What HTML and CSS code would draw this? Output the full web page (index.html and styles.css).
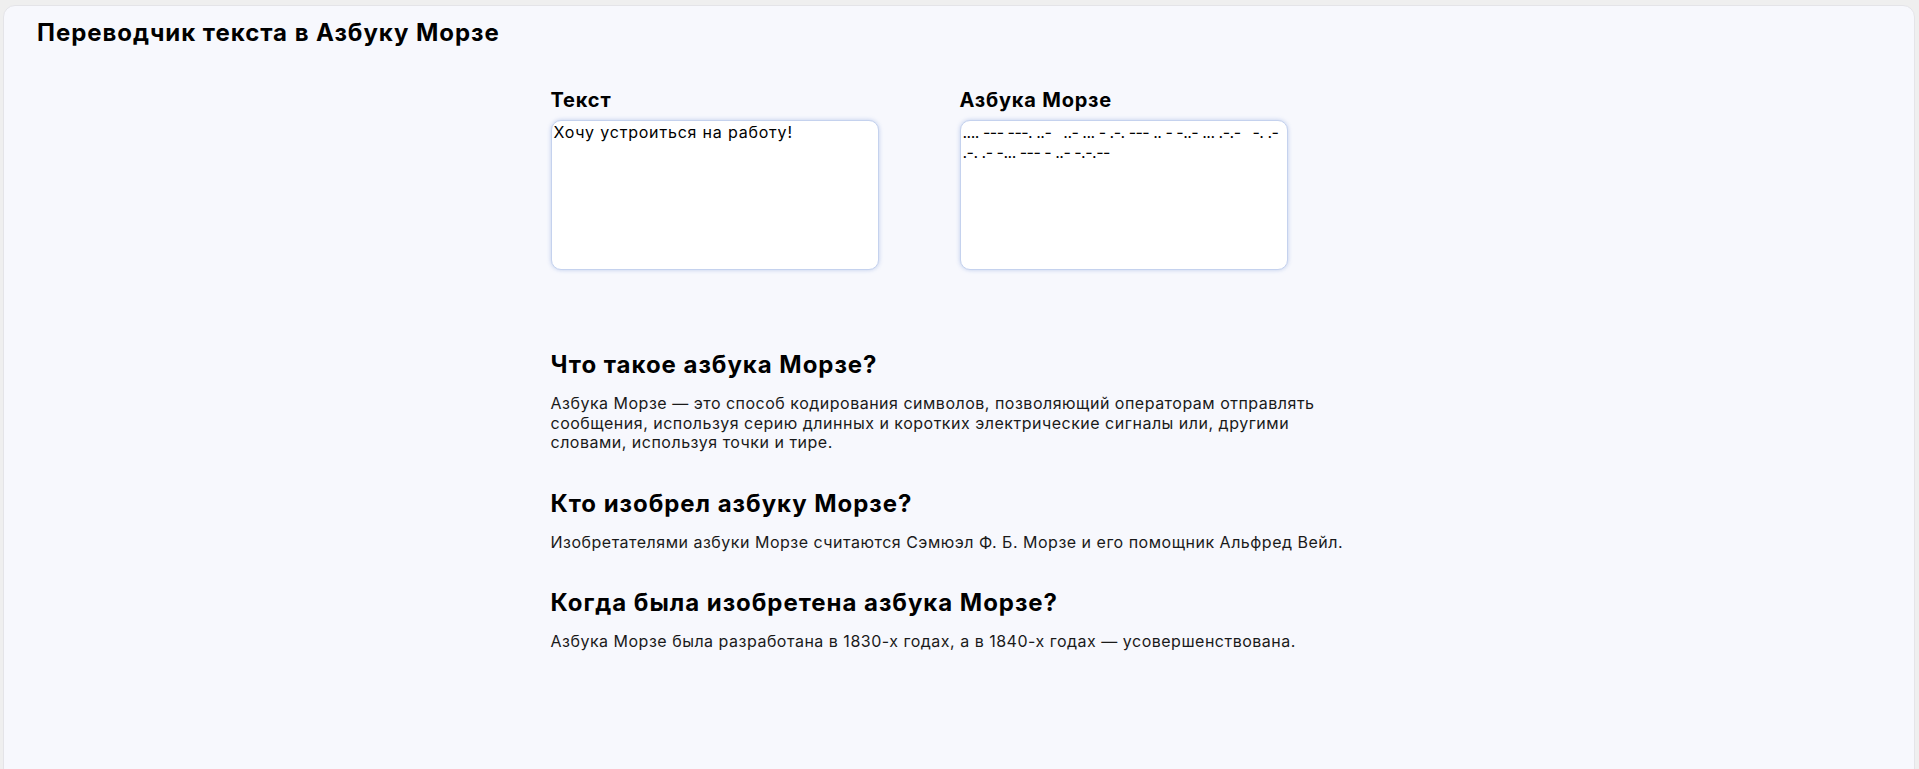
FILE: index.html
```html
<!DOCTYPE html>
<html lang="ru">
<head>
<meta charset="utf-8">
<title>Переводчик текста в Азбуку Морзе</title>
<link rel="stylesheet" href="styles.css">
</head>
<body>
<div class="card">
  <h1 class="title">Переводчик текста в Азбуку Морзе</h1>
  <main class="content">
    <section class="translator">
      <div class="field">
        <label class="field-label" for="src">Текст</label>
        <textarea id="src" class="field-input">Хочу устроиться на работу!</textarea>
      </div>
      <div class="field">
        <label class="field-label" for="dst">Азбука Морзе</label>
        <textarea id="dst" class="field-input field-input--morse">.... --- ---. ..-   ..- ... - .-. --- .. - -..- ... .-.-   -. .-   .-. .- -... --- - ..- -.-.--</textarea>
      </div>
    </section>
    <section class="faq">
      <h2 class="faq-q">Что такое азбука Морзе?</h2>
      <p class="faq-a">Азбука Морзе — это способ кодирования символов, позволяющий операторам отправлять сообщения, используя серию длинных и коротких электрические сигналы или, другими словами, используя точки и тире.</p>
      <h2 class="faq-q">Кто изобрел азбуку Морзе?</h2>
      <p class="faq-a">Изобретателями азбуки Морзе считаются Сэмюэл Ф. Б. Морзе и его помощник Альфред Вейл.</p>
      <h2 class="faq-q">Когда была изобретена азбука Морзе?</h2>
      <p class="faq-a">Азбука Морзе была разработана в 1830-х годах, а в 1840-х годах — усовершенствована.</p>
    </section>
  </main>
</div>
</body>
</html>
```
FILE: styles.css
```css
* { box-sizing: border-box; }
html, body { margin: 0; padding: 0; }
body {
  background: #efefef;
  font-family: Inter, "Noto Sans", sans-serif;
  color: #000;
  overflow: hidden;
  height: 769px;
}
.card {
  margin: 5px 4px 0 3px;
  min-height: 800px;
  background: #f7f8fd;
  border: 1px solid #e4e4e8;
  border-radius: 12px;
  padding: 12px 50px 0 33px;
}
.title {
  margin: 0;
  font-size: 24px;
  font-weight: 700;
  line-height: 29px;
  letter-spacing: 0.96px;
}
.content {
  width: 800px;
  margin: 0 auto;
}
.translator {
  display: flex;
  gap: 81px;
  margin-top: 41px;
}
.field {
  display: flex;
  flex-direction: column;
}
.field-label {
  font-size: 20px;
  font-weight: 700;
  line-height: 24px;
  letter-spacing: 0.8px;
  margin-bottom: 8px;
}
.field-input {
  width: 328px;
  height: 150px;
  resize: none;
  padding: 2px;
  border: 1px solid #c5d2ee;
  border-radius: 10px;
  background: #fff;
  box-shadow: 0 0 4px rgba(120, 150, 215, 0.45);
  font-family: Inter, "Noto Sans", sans-serif;
  font-size: 16px;
  line-height: 19.5px;
  letter-spacing: 0.8px;
  color: #000;
  outline: none;
}
.field-input--morse {
  letter-spacing: -0.5px;
}
.faq {
  margin-top: 80px;
}
.faq-q {
  margin: 0 0 15px;
  font-size: 24px;
  font-weight: 700;
  line-height: 29px;
  letter-spacing: 0.96px;
}
.faq-a {
  margin: 0 0 36px;
  font-size: 16px;
  line-height: 19.5px;
  letter-spacing: 0.5px;
  color: #1a1a1a;
}
```
